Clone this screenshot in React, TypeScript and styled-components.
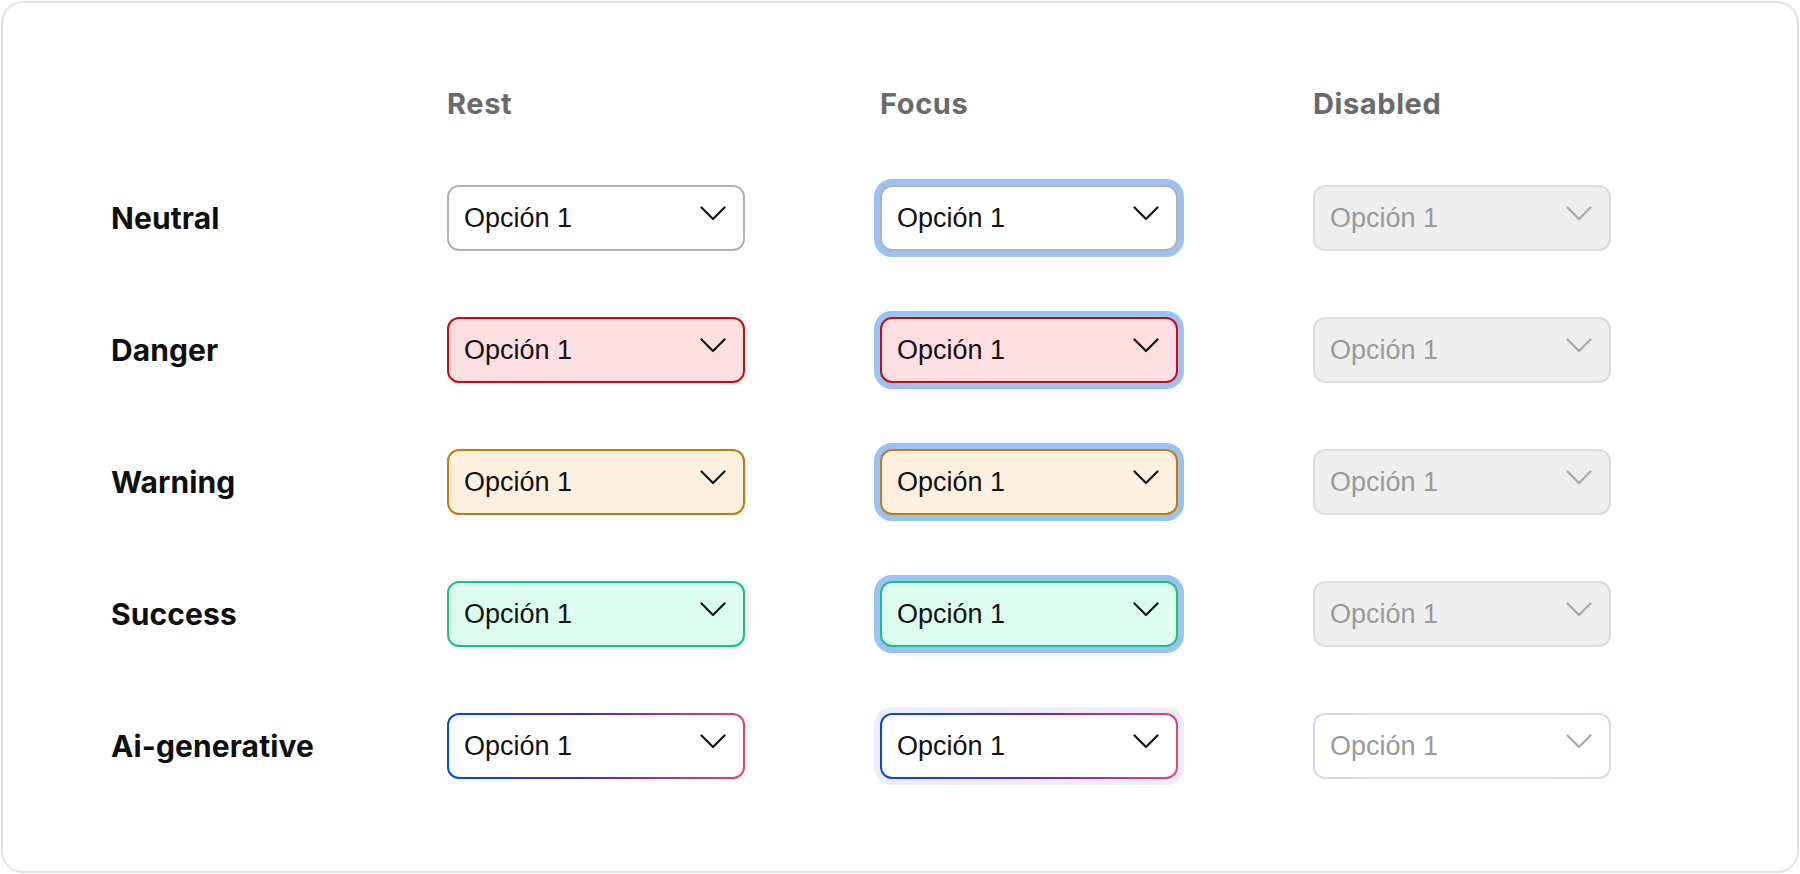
import React from "react";
import styled, { createGlobalStyle, css } from "styled-components";

type Variant = "neutral" | "danger" | "warning" | "success" | "ai";
type State = "rest" | "focus" | "disabled";

const GlobalStyle = createGlobalStyle`
  html, body {
    margin: 0;
    padding: 0;
    background: #fff;
  }
  #root {
    padding: 1px;
  }
`;

const palette: Record<Variant, { bg: string; border: string }> = {
  neutral: { bg: "#ffffff", border: "#b2b2b2" },
  danger: { bg: "#fedfe1", border: "#cc0a16" },
  warning: { bg: "#fdf0df", border: "#c77a0c" },
  success: { bg: "#dbfcee", border: "#19c27c" },
  ai: { bg: "#ffffff", border: "transparent" },
};

const Card = styled.div`
  box-sizing: border-box;
  width: 1798px;
  height: 872px;
  border: 2px solid #e1e1e1;
  border-radius: 22px;
  padding: 86px 0 0 108px;
  display: grid;
  grid-template-columns: 201px repeat(3, 298px);
  grid-auto-rows: 66px;
  grid-template-rows: 30px;
  column-gap: 135px;
  row-gap: 66px;
  align-items: center;
`;

const ColumnTitle = styled.div`
  font-family: Inter, "Liberation Sans", sans-serif;
  font-size: 29px;
  line-height: 30px;
  font-weight: 700;
  color: #6a6a6a;
  letter-spacing: 0.6px;
`;

const RowLabel = styled.div`
  font-family: Inter, "Liberation Sans", sans-serif;
  font-size: 30px;
  font-weight: 700;
  color: #0f0f0f;
  white-space: nowrap;
  letter-spacing: 0.1px;
`;

const aiBorder = css<{ $state: State }>`
  border-color: transparent;
  background:
    linear-gradient(#fff, #fff) padding-box,
    ${(p) =>
      p.$state === "disabled"
        ? "linear-gradient(90deg, #d3d8e4, #dcdcdc 20%, #dcdcdc 80%, #e4d6da)"
        : "linear-gradient(90deg, #0050d0, #4b28b4 45%, #9a3296 70%, #e5466c)"}
      border-box;
`;

const SelectBox = styled.div<{ $variant: Variant; $state: State }>`
  box-sizing: border-box;
  height: 66px;
  border: 2px solid ${(p) => palette[p.$variant].border};
  border-radius: 12px;
  background: ${(p) => palette[p.$variant].bg};
  display: flex;
  align-items: center;
  justify-content: space-between;
  padding: 0 17px 0 15px;
  cursor: pointer;

  ${(p) => p.$variant === "ai" && aiBorder}

  ${(p) =>
    p.$state === "focus" &&
    css`
      box-shadow: 0 0 0 6px ${p.$variant === "ai" ? "#efebfc" : "#99c2f7"};
    `}

  ${(p) =>
    p.$state === "disabled" &&
    p.$variant !== "ai" &&
    css`
      background: #eeeeee;
      border-color: #dcdcdc;
    `}
`;

const Value = styled.span<{ $disabled: boolean }>`
  font-family: "Liberation Sans", Arial, sans-serif;
  font-size: 27px;
  color: ${(p) => (p.$disabled ? "#999999" : "#111111")};
`;

const Chevron = styled.svg<{ $disabled: boolean }>`
  width: 26px;
  height: 15px;
  margin-top: -10px;
  flex-shrink: 0;
  stroke: ${(p) => (p.$disabled ? "#a8a8a8" : "#111111")};
`;

const rows: { variant: Variant; label: string }[] = [
  { variant: "neutral", label: "Neutral" },
  { variant: "danger", label: "Danger" },
  { variant: "warning", label: "Warning" },
  { variant: "success", label: "Success" },
  { variant: "ai", label: "Ai-generative" },
];

const states: { state: State; title: string }[] = [
  { state: "rest", title: "Rest" },
  { state: "focus", title: "Focus" },
  { state: "disabled", title: "Disabled" },
];

const Select: React.FC<{ variant: Variant; state: State }> = ({ variant, state }) => {
  const disabled = state === "disabled";
  return (
    <SelectBox $variant={variant} $state={state} aria-disabled={disabled}>
      <Value $disabled={disabled}>Opción 1</Value>
      <Chevron $disabled={disabled} viewBox="0 0 26 15" fill="none" strokeWidth={2.2}>
        <polyline points="1.5,1.5 13,13 24.5,1.5" strokeLinecap="round" strokeLinejoin="round" />
      </Chevron>
    </SelectBox>
  );
};

export default function App() {
  return (
    <>
      <GlobalStyle />
      <Card>
        <div />
        {states.map((s) => (
          <ColumnTitle key={s.state}>{s.title}</ColumnTitle>
        ))}
        {rows.map((r) => (
          <React.Fragment key={r.variant}>
            <RowLabel>{r.label}</RowLabel>
            {states.map((s) => (
              <Select key={s.state} variant={r.variant} state={s.state} />
            ))}
          </React.Fragment>
        ))}
      </Card>
    </>
  );
}
